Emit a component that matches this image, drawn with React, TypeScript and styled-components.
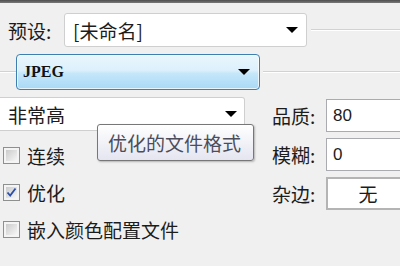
import React from "react";
import styled, { createGlobalStyle } from "styled-components";

const Global = createGlobalStyle`
  html, body { margin: 0; padding: 0; background: #f0f0f0; }
  body { font-family: "Noto Sans CJK SC", "Noto Sans", sans-serif; }
  * { box-sizing: border-box; }
`;

const cjk = `"Microsoft YaHei", "Noto Sans CJK SC", "Noto Sans", sans-serif`;

const Panel = styled.div`
  position: relative;
  width: 400px;
  height: 266px;
  overflow: hidden;
  background: #f0f0f0;
  color: #1c1c1c;
  font-family: ${cjk};
`;

const TopEdge = styled.div`
  height: 3px;
  background: linear-gradient(#4e4e4e, #7a7a7a);
`;

const Row = styled.div<{ $top: number; $h: number }>`
  display: flex;
  align-items: center;
  margin-top: ${(p) => p.$top}px;
  height: ${(p) => p.$h}px;
`;

const Label = styled.span<{ $w: number; $pl?: number }>`
  width: ${(p) => p.$w}px;
  flex: none;
  padding-left: ${(p) => p.$pl ?? 0}px;
  font-size: 19px;
  line-height: 1;
  white-space: nowrap;
`;

const Rule = styled.div<{ $w?: number; $ml?: number }>`
  ${(p) => (p.$w ? `width: ${p.$w}px; flex: none;` : "flex: 1;")}
  margin-left: ${(p) => p.$ml ?? 0}px;
  height: 2px;
  border-top: 1px solid #d2d2d2;
  border-bottom: 1px solid #ffffff;
`;

const Arrow = styled.span`
  width: 0;
  height: 0;
  flex: none;
  border-left: 6px solid transparent;
  border-right: 6px solid transparent;
  border-top: 6px solid #000;
`;

const Select = styled.div<{ $w: number; $pr: number }>`
  width: ${(p) => p.$w}px;
  height: 100%;
  flex: none;
  display: flex;
  align-items: center;
  justify-content: space-between;
  padding: 0 ${(p) => p.$pr}px 0 8px;
  background: #fff;
  border: 1px solid #cfcfcf;
  border-radius: 3px;
  font-size: 19px;
  line-height: 1;
`;

const FormatSelect = styled.div`
  width: 244px;
  height: 100%;
  flex: none;
  display: flex;
  align-items: center;
  justify-content: space-between;
  padding: 0 9px 0 6px;
  border: 1px solid #3c7fb1;
  border-radius: 4px;
  box-shadow: inset 0 0 0 1px rgba(255, 255, 255, 0.7);
  background: linear-gradient(#eaf6fd 0%, #dcf0fc 45%, #c4e6fa 55%, #a9d9f5 100%);
  font-family: "Liberation Serif", serif;
  font-weight: bold;
  font-size: 16px;
  color: #111;
`;

const Main = styled.div`
  display: flex;
  margin-top: 7px;
`;

const LeftCol = styled.div`
  width: 245px;
  flex: none;
  display: flex;
  flex-direction: column;
`;

const QualitySelect = styled(Select)`
  height: 34px;
  border-left: none;
  border-radius: 0 3px 3px 0;
`;

const CheckList = styled.div`
  padding-top: 6px;
  display: flex;
  flex-direction: column;
`;

const CheckRow = styled.label`
  display: flex;
  align-items: center;
  gap: 7px;
  height: 37px;
  padding-left: 3px;
  font-size: 19px;
  line-height: 1;
`;

const Box = styled.span<{ $on?: boolean }>`
  width: 17px;
  height: 17px;
  flex: none;
  display: flex;
  align-items: center;
  justify-content: center;
  border: 1px solid #8e8f8f;
  background: #f4f4f4;
  box-shadow: inset 0 0 0 2px #f4f4f4;
  & > span {
    width: 11px;
    height: 11px;
    background: linear-gradient(135deg, #cbcbcb, #f6f6f6);
    display: flex;
    align-items: center;
    justify-content: center;
  }
`;

const RightCol = styled.div`
  margin-left: 27px;
  padding-top: 2px;
  display: flex;
  flex-direction: column;
  gap: 6px;
`;

const Field = styled.div`
  display: flex;
  align-items: center;
  height: 33px;
`;

const Input = styled.div<{ $center?: boolean }>`
  width: 84px;
  height: 100%;
  flex: none;
  display: flex;
  align-items: center;
  justify-content: ${(p) => (p.$center ? "center" : "flex-start")};
  padding-left: ${(p) => (p.$center ? 0 : 6)}px;
  background: #fff;
  border: 1px solid #a9abb0;
  font-family: ${(p) => (p.$center ? cjk : `"Liberation Sans", Arial, sans-serif`)};
  font-size: ${(p) => (p.$center ? 19 : 17)}px;
  line-height: 1;
  ${(p) => (p.$center ? "border: 2px solid #b4b4b4;" : "")}
`;

const Tooltip = styled.div`
  position: absolute;
  left: 97px;
  top: 124px;
  width: 157px;
  height: 37px;
  display: flex;
  align-items: center;
  padding-left: 10px;
  border: 1px solid #777;
  border-radius: 3px;
  background: linear-gradient(#ffffff, #e4e5f0);
  box-shadow: 1px 1px 2px rgba(0, 0, 0, 0.25);
  color: #4b4d5a;
  font-size: 19px;
  line-height: 1;
  white-space: nowrap;
`;

const Check = () => (
  <svg width="11" height="11" viewBox="0 0 11 11">
    <path d="M1.5 5.5 L4.2 8.6 L9.5 1.5" fill="none" stroke="#2b4fa6" strokeWidth="1.8" />
  </svg>
);

const CheckBox = ({ on }: { on?: boolean }) => (
  <Box $on={on}>
    <span>{on && <Check />}</span>
  </Box>
);

export default function App() {
  return (
    <Panel>
      <Global />
      <TopEdge />
      <Row $top={10} $h={34}>
        <Label $w={64} $pl={8}>预设:</Label>
        <Select $w={243} $pr={8}>
          <span>[未命名]</span>
          <Arrow />
        </Select>
        <Rule $ml={4} />
      </Row>
      <Row $top={7} $h={36}>
        <Rule $w={16} />
        <FormatSelect>
          <span>JPEG</span>
          <Arrow />
        </FormatSelect>
        <Rule $ml={3} />
      </Row>
      <Main>
        <LeftCol>
          <QualitySelect $w={245} $pr={7}>
            <span>非常高</span>
            <Arrow />
          </QualitySelect>
          <CheckList>
            <CheckRow>
              <CheckBox />
              连续
            </CheckRow>
            <CheckRow>
              <CheckBox on />
              优化
            </CheckRow>
            <CheckRow>
              <CheckBox />
              嵌入颜色配置文件
            </CheckRow>
          </CheckList>
        </LeftCol>
        <RightCol>
          <Field>
            <Label $w={54}>品质:</Label>
            <Input>80</Input>
          </Field>
          <Field>
            <Label $w={54}>模糊:</Label>
            <Input>0</Input>
          </Field>
          <Field>
            <Label $w={54}>杂边:</Label>
            <Input $center>无</Input>
          </Field>
        </RightCol>
      </Main>
      <Tooltip>优化的文件格式</Tooltip>
    </Panel>
  );
}
